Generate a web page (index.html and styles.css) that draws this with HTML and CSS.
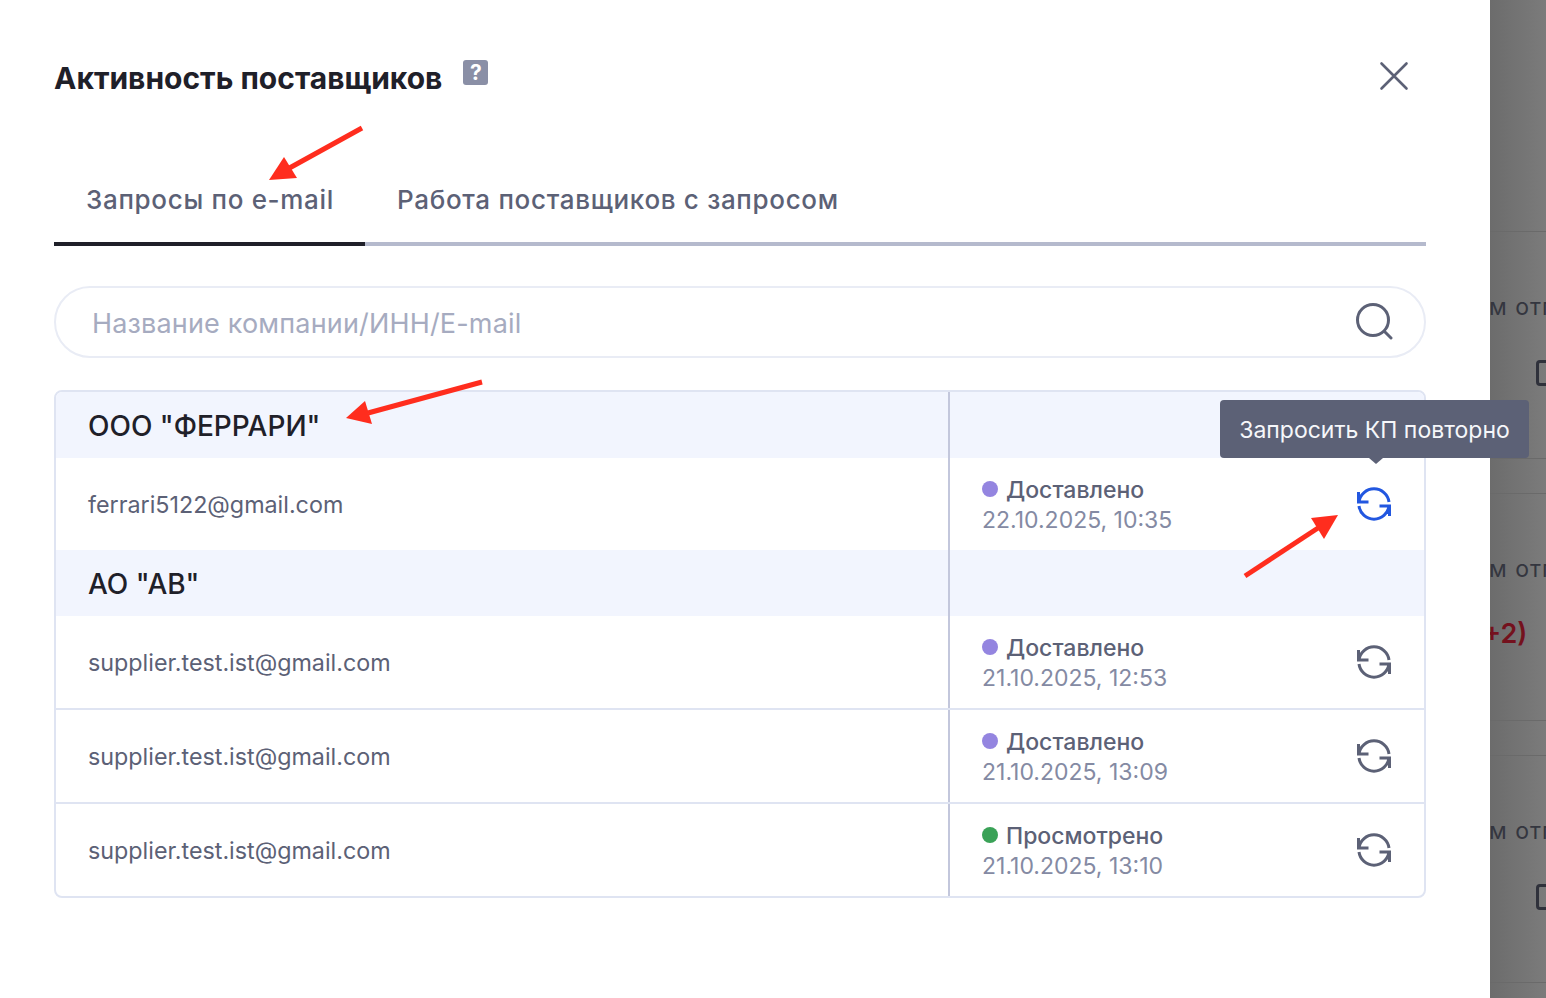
FILE: index.html
```html
<!DOCTYPE html>
<html lang="ru">
<head>
<meta charset="utf-8">
<title>Активность поставщиков</title>
<link rel="stylesheet" href="styles.css">
</head>
<body>
<div class="page">
  <main class="modal">
    <header class="modal-head">
      <h1 class="title">Активность поставщиков</h1>
      <span class="help">?</span>
      <svg class="close" viewBox="0 0 30 30" width="30" height="30"><path d="M2.5 2.5 27.5 27.5M27.5 2.5 2.5 27.5"/></svg>
    </header>
    <nav class="tabs">
      <div class="tab tab-active">Запросы по e-mail</div>
      <div class="tab">Работа поставщиков с запросом</div>
    </nav>
    <div class="search">
      <span class="search-text">Название компании/ИНН/E-mail</span>
      <svg class="search-icon" viewBox="0 0 38 38" width="38" height="38"><circle cx="18" cy="17" r="15.5"/><path d="M29.5 28.5 36 35"/></svg>
    </div>
    <section class="table">
      <div class="row row-group">
        <div class="cell-main group-name">ООО "ФЕРРАРИ"</div>
        <div class="cell-side"></div>
      </div>
      <div class="row row-plain">
        <div class="cell-main email">ferrari5122@gmail.com</div>
        <div class="cell-side">
          <div class="status">
            <div class="status-name"><i class="dot dot-purple"></i>Доставлено</div>
            <div class="status-date">22.10.2025, 10:35</div>
          </div>
          <svg class="refresh refresh-active" viewBox="0 0 36 36" width="36" height="36"><path d="M2.5 6V16H12.5M3 16A15.13 15.13 0 0 1 33 16M33.500 30V20H23.500M33 20A15.130 15.130 0 0 1 3 20"/></svg>
        </div>
      </div>
      <div class="row row-group">
        <div class="cell-main group-name">АО "АВ"</div>
        <div class="cell-side"></div>
      </div>
      <div class="row row-line">
        <div class="cell-main email">supplier.test.ist@gmail.com</div>
        <div class="cell-side">
          <div class="status">
            <div class="status-name"><i class="dot dot-purple"></i>Доставлено</div>
            <div class="status-date">21.10.2025, 12:53</div>
          </div>
          <svg class="refresh" viewBox="0 0 36 36" width="36" height="36"><path d="M2.5 6V16H12.5M3 16A15.13 15.13 0 0 1 33 16M33.500 30V20H23.500M33 20A15.130 15.130 0 0 1 3 20"/></svg>
        </div>
      </div>
      <div class="row row-line">
        <div class="cell-main email">supplier.test.ist@gmail.com</div>
        <div class="cell-side">
          <div class="status">
            <div class="status-name"><i class="dot dot-purple"></i>Доставлено</div>
            <div class="status-date">21.10.2025, 13:09</div>
          </div>
          <svg class="refresh" viewBox="0 0 36 36" width="36" height="36"><path d="M2.5 6V16H12.5M3 16A15.13 15.13 0 0 1 33 16M33.500 30V20H23.500M33 20A15.130 15.130 0 0 1 3 20"/></svg>
        </div>
      </div>
      <div class="row row-plain">
        <div class="cell-main email">supplier.test.ist@gmail.com</div>
        <div class="cell-side">
          <div class="status">
            <div class="status-name"><i class="dot dot-green"></i>Просмотрено</div>
            <div class="status-date">21.10.2025, 13:10</div>
          </div>
          <svg class="refresh" viewBox="0 0 36 36" width="36" height="36"><path d="M2.5 6V16H12.5M3 16A15.13 15.13 0 0 1 33 16M33.500 30V20H23.500M33 20A15.130 15.130 0 0 1 3 20"/></svg>
        </div>
      </div>
    </section>
  </main>
  <aside class="backdrop">
    <div class="bg-row"><div class="bg-text">м отгрузки</div><div class="bg-box"></div></div>
    <div class="bg-row"><div class="bg-text">м отгрузки</div><div class="bg-red">+2)</div></div>
    <div class="bg-row"><div class="bg-text">м отгрузки</div><div class="bg-box"></div></div>
  </aside>
  <div class="tooltip">Запросить КП повторно</div>
  <svg class="arrows" viewBox="0 0 1546 998" width="1546" height="998">
    <path class="arrow-line" d="M362 128 284 171"/>
    <path class="arrow-head" d="M269 180 284 157 297 178Z"/>
    <path class="arrow-line" d="M482 382 368 413"/>
    <path class="arrow-head" d="M346 418 365 401 372 424Z"/>
    <path class="arrow-line" d="M1245 576 1318 528"/>
    <path class="arrow-head" d="M1338 515 1311 518 1324 539Z"/>
  </svg>
</div>
</body>
</html>
```
FILE: styles.css
```css
* { box-sizing: border-box; }
html, body { margin: 0; padding: 0; }
body {
  width: 1546px;
  height: 998px;
  overflow: hidden;
  font-family: Inter, "Noto Sans", sans-serif;
  background: #fff;
}
.page { position: relative; display: flex; width: 1546px; height: 998px; }

.modal {
  position: relative;
  z-index: 1;
  width: 1490px;
  padding: 0 64px 0 54px;
  background: #fff;
}
.modal-head { display: flex; align-items: flex-start; height: 157px; padding-top: 60px; }
.title {
  margin: 0;
  font-size: 30px;
  line-height: 36px;
  font-weight: 700;
  color: #1f2029;
  white-space: nowrap;
}
.help {
  width: 25px;
  height: 25px;
  margin: 0 0 0 21px;
  border-radius: 3px;
  background: #8a8fa6;
  color: #fff;
  font-size: 21px;
  line-height: 25px;
  font-weight: 700;
  text-align: center;
}
.close {
  margin: 1px 17px 0 auto;
  fill: none;
  stroke: #5c6176;
  stroke-width: 2.6;
  stroke-linecap: round;
}

.tabs { display: flex; height: 89px; border-bottom: 4px solid #b5bacd; }
.tab {
  height: 89px;
  padding: 25px 32px 0;
  font-size: 26px;
  line-height: 36px;
  font-weight: 500;
  letter-spacing: 0.68px;
  white-space: nowrap;
  color: #5c6176;
}
.tab-active { width: 311px; border-bottom: 4px solid #1f2029; }

.search {
  display: flex;
  align-items: center;
  justify-content: space-between;
  height: 72px;
  margin-top: 40px;
  padding: 2px 31px 0 36px;
  border: 2px solid #e9ecf5;
  border-radius: 36px;
}
.search-text { font-size: 27px; letter-spacing: 0.17px; color: #a6abc0; }
.search-icon { margin-top: -2px; fill: none; stroke: #5c6176; stroke-width: 3; stroke-linecap: round; }

.table {
  margin-top: 32px;
  border: 2px solid #dfe4f2;
  border-radius: 8px;
  overflow: hidden;
}
.row { display: flex; }
.row-group { height: 66px; background: #f2f5fe; }
.row-plain { height: 92px; }
.row-line { height: 94px; border-bottom: 2px solid #dfe4f2; }
.cell-main {
  display: flex;
  align-items: center;
  width: 894px;
  padding-left: 32px;
  border-right: 2px solid #c3c7dc;
}
.cell-side {
  display: flex;
  align-items: center;
  justify-content: space-between;
  flex: 1;
  padding: 0 32px;
}
.group-name { padding-top: 2px; font-size: 28px; font-weight: 500; color: #1f2029; }
.email { font-size: 23.3px; color: #5c6176; }
.status { padding-top: 2px; font-size: 23px; line-height: 30px; }
.status-name { display: flex; align-items: center; font-weight: 500; color: #5c6176; }
.status-date { color: #848aa3; }
.dot { width: 16px; height: 16px; margin: -2px 8px 0 0; border-radius: 50%; }
.dot-purple { background: #9485e0; }
.dot-green { background: #3aa257; }
.refresh {
  fill: none;
  stroke: #5c6176;
  stroke-width: 3;
}
.refresh-active { stroke: #2257e0; }

.backdrop {
  flex: 1;
  padding-top: 231px;
  background: linear-gradient(90deg, #6c6c6c, #7b7b7b);
  overflow: hidden;
  white-space: nowrap;
}
.bg-row {
  position: relative;
  height: 228px;
  margin-bottom: 34px;
  padding-top: 60px;
  border-top: 1px solid #6a6a6a;
  border-bottom: 1px solid #6a6a6a;
}
.bg-text { margin-left: -1px; font-size: 23px; line-height: 30px; letter-spacing: 1px; color: #34363f; }
.bg-box {
  width: 20px;
  height: 26px;
  margin: 38px 0 0 46px;
  border: 3px solid #2f313b;
  border-radius: 4px;
}
.bg-red {
  position: absolute;
  top: 122px;
  left: -7px;
  font-size: 27px;
  line-height: 36px;
  font-weight: 600;
  color: #74111d;
}

.tooltip {
  position: absolute;
  z-index: 2;
  left: 1220px;
  top: 400px;
  width: 309px;
  height: 58px;
  padding-top: 1px;
  border-radius: 4px;
  background: #5c6176;
  color: #f6f7fa;
  font-size: 23px;
  line-height: 58px;
  text-align: center;
}
.tooltip::after {
  content: "";
  position: absolute;
  left: 149px;
  top: 58px;
  border-left: 7px solid transparent;
  border-right: 7px solid transparent;
  border-top: 6px solid #5c6176;
}
.arrows { position: absolute; z-index: 3; left: 0; top: 0; pointer-events: none; }
.arrow-line { fill: none; stroke: #ff2d1e; stroke-width: 5; }
.arrow-head { fill: #ff2d1e; }
```
